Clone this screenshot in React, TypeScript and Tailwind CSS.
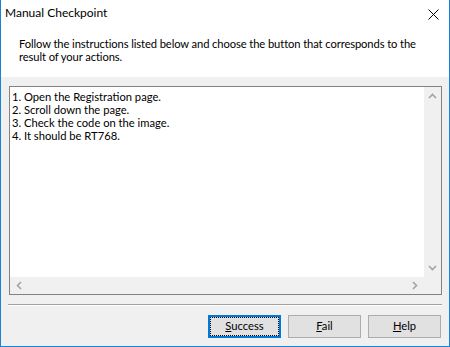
import React from "react";

const font = "font-['Segoe_UI','Lato','Liberation_Sans',sans-serif]";

const Chevron = ({ dir }: { dir: "up" | "down" | "left" | "right" }) => {
  const paths: Record<string, string> = {
    up: "M1 6 L4.5 2.5 L8 6",
    down: "M1 3 L4.5 6.5 L8 3",
    left: "M6 1 L2.5 4.5 L6 8",
    right: "M3 1 L6.5 4.5 L3 8",
  };
  return (
    <svg width="9" height="9" viewBox="0 0 9 9" className="block">
      <path d={paths[dir]} fill="none" stroke="#a3a3a3" strokeWidth="1.6" />
    </svg>
  );
};

const DialogButton = ({
  label,
  focused,
}: {
  label: React.ReactNode;
  focused?: boolean;
}) => (
  <button
    className={`w-[73px] h-[23px] bg-[#e1e1e1] flex items-center justify-center ${
      focused ? "border-2 border-[#0078d7]" : "border border-[#adadad]"
    }`}
  >
    {focused ? (
      <span className="w-full h-full flex items-center justify-center border border-dotted border-black">
        {label}
      </span>
    ) : (
      label
    )}
  </button>
);

export default function App() {
  const steps = [
    "1. Open the Registration page.",
    "2. Scroll down the page.",
    "3. Check the code on the image.",
    "4. It should be RT768.",
  ];

  return (
    <div
      className={`w-[450px] h-[347px] bg-[#f0f0f0] border-x border-b border-[#1883d7] flex flex-col text-[11.2px] text-black ${font}`}
    >
      {/* title + header */}
      <div className="bg-white h-[77px] flex flex-col">
        <div className="h-[30px] flex items-start justify-between pl-[4px]">
          <span className="mt-[5px] leading-[16px] text-[12px]">Manual Checkpoint</span>
          <svg width="11" height="11" viewBox="0 0 11 11" className="mt-[9px] mr-[10px]">
            <path d="M0.5 0.5 L10.5 10.5 M10.5 0.5 L0.5 10.5" stroke="#000" strokeWidth="1" />
          </svg>
        </div>
        <p className="pl-[18px] mt-[7px] leading-[13px] whitespace-nowrap tracking-[-0.1px]">
          Follow the instructions listed below and choose the button that corresponds to the
          <br />
          result of your actions.
        </p>
      </div>

      {/* text box */}
      <div className="ml-[8px] mt-[9px] w-[433px] h-[209px] border border-[#828282] bg-white flex flex-col">
        <div className="flex flex-1 min-h-0">
          <div className="flex-1 pl-[2px] pt-[3px] leading-[13px]">
            {steps.map((s) => (
              <div key={s}>{s}</div>
            ))}
          </div>
          <div className="w-[17px] bg-[#f0f0f0] flex flex-col items-center justify-between py-[5px]">
            <Chevron dir="up" />
            <Chevron dir="down" />
          </div>
        </div>
        <div className="h-[17px] flex">
          <div className="flex-1 bg-[#f0f0f0] flex items-center justify-between px-[5px]">
            <Chevron dir="left" />
            <Chevron dir="right" />
          </div>
          <div className="w-[17px] bg-[#f0f0f0]" />
        </div>
      </div>

      {/* separator */}
      <div className="ml-[7px] mt-[9px] w-[434px] border-t border-[#a0a0a0] border-b border-b-white" />

      {/* buttons */}
      <div className="mt-[9px] flex justify-end gap-[7px] pr-[8px]">
        <DialogButton
          focused
          label={
            <span>
              <u>S</u>uccess
            </span>
          }
        />
        <DialogButton
          label={
            <span>
              <u>F</u>ail
            </span>
          }
        />
        <DialogButton
          label={
            <span>
              <u>H</u>elp
            </span>
          }
        />
      </div>
    </div>
  );
}
